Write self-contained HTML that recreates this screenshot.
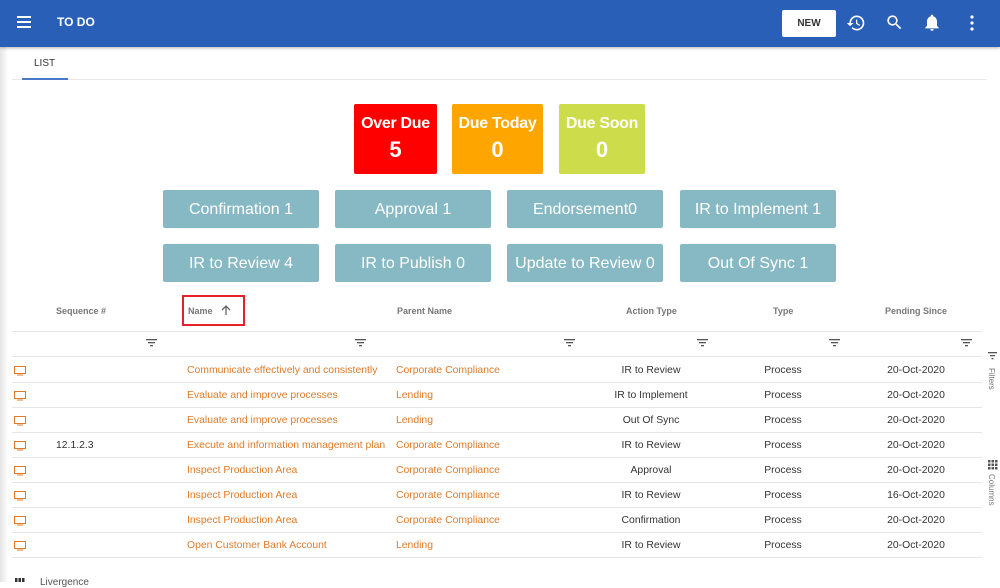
<!DOCTYPE html>
<html><head><style>
*{margin:0;padding:0;box-sizing:border-box}
body{width:1000px;height:582px;overflow:hidden;background:#fff;font-family:"Liberation Sans",Arial,sans-serif;position:relative}
.hdr{position:absolute;left:0;top:0;width:1000px;height:47px;background:#2a5fb8;box-shadow:0 1px 3px rgba(0,0,0,.3)}
.abs{position:absolute}
.tile{position:absolute;color:#fff;font-weight:bold;text-align:center;border-radius:2px}
.tile .t{font-size:16px;margin-top:11px;letter-spacing:-0.3px}
.tile .n{font-size:22px;margin-top:4px}
.btn{position:absolute;width:156px;height:38px;background:#86b9c3;color:#fff;font-size:16px;text-align:center;line-height:40px;border-radius:2px}
.th{position:absolute;top:306px;font-size:9px;font-weight:bold;color:#777}
.line{position:absolute;left:12px;width:970px;height:1px;background:#e6e6e6}
.c{position:absolute;font-size:10.4px;color:#333}
.o{color:#e07b2a}
.r{position:relative;height:25px}.r .c{top:7px}.r .ln{position:absolute;left:12px;width:970px;top:24px;height:1px;background:#e6e6e6}.mon{position:absolute;left:14px;top:8px}
</style></head><body>
<div style="position:absolute;left:0;top:47px;width:8px;height:535px;background:linear-gradient(90deg,#e4e4e4,#fff)"></div>
<div class="hdr">
 <svg class="abs" style="left:17px;top:16px" width="14" height="12"><rect y="0" width="14" height="2" fill="#fff"/><rect y="5" width="14" height="2" fill="#fff"/><rect y="10" width="14" height="2" fill="#fff"/></svg>
 <div class="abs" style="left:57px;top:15px;color:#fff;font-weight:bold;font-size:12px">TO DO</div>
 <div class="abs" style="left:782px;top:10px;width:54px;height:27px;background:#fff;border-radius:2px;font-size:10px;font-weight:bold;color:#333;text-align:center;line-height:27px">NEW</div>
 <svg class="abs" style="left:846px;top:13px" width="20" height="20" viewBox="0 0 24 24"><path fill="#fff" d="M13 3a9 9 0 0 0-9 9H1l3.9 3.9L9 12H6a7 7 0 1 1 2.05 4.95l-1.42 1.42A9 9 0 1 0 13 3zm-1 5v5l4.3 2.5.7-1.2-3.5-2.1V8z"/></svg>
 <svg class="abs" style="left:885px;top:13px" width="19" height="19" viewBox="0 0 24 24"><path fill="#fff" d="M15.5 14h-.8l-.3-.3A6.5 6.5 0 1 0 9.5 16a6.5 6.5 0 0 0 4.2-1.6l.3.3v.8l5 5 1.5-1.5-5-5zm-6 0a4.5 4.5 0 1 1 0-9 4.5 4.5 0 0 1 0 9z"/></svg>
 <svg class="abs" style="left:922px;top:12px" width="20" height="21" viewBox="0 0 24 24"><path fill="#fff" d="M12 22a2 2 0 0 0 2-2h-4a2 2 0 0 0 2 2zm6-6v-5c0-3.1-1.6-5.6-4.5-6.3V4a1.5 1.5 0 0 0-3 0v.7C7.6 5.4 6 7.9 6 11v5l-2 2v1h16v-1z"/></svg>
 <svg class="abs" style="left:970px;top:15px" width="4" height="16"><circle cx="2" cy="2" r="1.6" fill="#fff"/><circle cx="2" cy="8" r="1.6" fill="#fff"/><circle cx="2" cy="14" r="1.6" fill="#fff"/></svg>
</div>
<div class="abs" style="left:34px;top:58px;font-size:10px;color:#333">LIST</div>
<div class="abs" style="left:12px;top:79px;width:975px;height:1px;background:#e8e8e8"></div>
<div class="abs" style="left:22px;top:78px;width:46px;height:2px;background:#4a78c8"></div>

<div class="tile" style="left:354px;top:104px;width:83px;height:70px;background:#ff0000"><div class="t">Over Due</div><div class="n">5</div></div>
<div class="tile" style="left:452px;top:104px;width:91px;height:70px;background:#ffa500"><div class="t">Due Today</div><div class="n">0</div></div>
<div class="tile" style="left:559px;top:104px;width:86px;height:70px;background:#cddc4a"><div class="t">Due Soon</div><div class="n">0</div></div>

<div class="btn" style="left:163px;top:190px">Confirmation 1</div>
<div class="btn" style="left:335px;top:190px">Approval 1</div>
<div class="btn" style="left:507px;top:190px">Endorsement0</div>
<div class="btn" style="left:680px;top:190px">IR to Implement 1</div>
<div class="btn" style="left:163px;top:244px">IR to Review 4</div>
<div class="btn" style="left:335px;top:244px">IR to Publish 0</div>
<div class="btn" style="left:507px;top:244px">Update to Review 0</div>
<div class="btn" style="left:680px;top:244px">Out Of Sync 1</div>

<div class="th" style="left:56px">Sequence #</div>
<div class="abs" style="left:182px;top:295px;width:63px;height:31px;border:2px solid #e8202a"></div>
<div class="th" style="left:188px">Name</div>
<svg class="abs" style="left:221px;top:305px" width="10" height="11" viewBox="0 0 10 11"><path d="M5 10V1M1 5l4-4 4 4" stroke="#666" stroke-width="1.3" fill="none"/></svg>
<div class="th" style="left:397px">Parent Name</div>
<div class="th" style="left:626px">Action Type</div>
<div class="th" style="left:773px">Type</div>
<div class="th" style="left:885px">Pending Since</div>
<div class="line" style="top:331px"></div>
<div class="line" style="top:356px"></div>

<svg class="abs" style="left:0;top:339px" width="982" height="10">
<g fill="#555">
<rect x="146" y="0" width="11" height="1.3"/><rect x="148" y="3" width="7" height="1.3"/><rect x="150" y="6" width="3" height="1.3"/>
<rect x="355" y="0" width="11" height="1.3"/><rect x="357" y="3" width="7" height="1.3"/><rect x="359" y="6" width="3" height="1.3"/>
<rect x="564" y="0" width="11" height="1.3"/><rect x="566" y="3" width="7" height="1.3"/><rect x="568" y="6" width="3" height="1.3"/>
<rect x="697" y="0" width="11" height="1.3"/><rect x="699" y="3" width="7" height="1.3"/><rect x="701" y="6" width="3" height="1.3"/>
<rect x="829" y="0" width="11" height="1.3"/><rect x="831" y="3" width="7" height="1.3"/><rect x="833" y="6" width="3" height="1.3"/>
<rect x="961" y="0" width="11" height="1.3"/><rect x="963" y="3" width="7" height="1.3"/><rect x="965" y="6" width="3" height="1.3"/>
</g></svg>

<div style="position:absolute;left:0;top:358px;width:1000px">
<div class="r"><svg class="mon" width="12" height="10"><rect x="0.5" y="0.5" width="11" height="7" fill="none" stroke="#e07b2a" stroke-width="1"/><rect x="3" y="8.5" width="6" height="1" fill="#e07b2a"/></svg><div class="c o" style="left:187px">Communicate effectively and consistently</div><div class="c o" style="left:396px">Corporate Compliance</div><div class="c" style="left:590px;width:122px;text-align:center">IR to Review</div><div class="c" style="left:740px;width:86px;text-align:center">Process</div><div class="c" style="left:866px;width:100px;text-align:center">20-Oct-2020</div><div class="ln"></div></div>
<div class="r"><svg class="mon" width="12" height="10"><rect x="0.5" y="0.5" width="11" height="7" fill="none" stroke="#e07b2a" stroke-width="1"/><rect x="3" y="8.5" width="6" height="1" fill="#e07b2a"/></svg><div class="c o" style="left:187px">Evaluate and improve processes</div><div class="c o" style="left:396px">Lending</div><div class="c" style="left:590px;width:122px;text-align:center">IR to Implement</div><div class="c" style="left:740px;width:86px;text-align:center">Process</div><div class="c" style="left:866px;width:100px;text-align:center">20-Oct-2020</div><div class="ln"></div></div>
<div class="r"><svg class="mon" width="12" height="10"><rect x="0.5" y="0.5" width="11" height="7" fill="none" stroke="#e07b2a" stroke-width="1"/><rect x="3" y="8.5" width="6" height="1" fill="#e07b2a"/></svg><div class="c o" style="left:187px">Evaluate and improve processes</div><div class="c o" style="left:396px">Lending</div><div class="c" style="left:590px;width:122px;text-align:center">Out Of Sync</div><div class="c" style="left:740px;width:86px;text-align:center">Process</div><div class="c" style="left:866px;width:100px;text-align:center">20-Oct-2020</div><div class="ln"></div></div>
<div class="r"><svg class="mon" width="12" height="10"><rect x="0.5" y="0.5" width="11" height="7" fill="none" stroke="#e07b2a" stroke-width="1"/><rect x="3" y="8.5" width="6" height="1" fill="#e07b2a"/></svg><div class="c" style="left:56px">12.1.2.3</div><div class="c o" style="left:187px">Execute and information management plan</div><div class="c o" style="left:396px">Corporate Compliance</div><div class="c" style="left:590px;width:122px;text-align:center">IR to Review</div><div class="c" style="left:740px;width:86px;text-align:center">Process</div><div class="c" style="left:866px;width:100px;text-align:center">20-Oct-2020</div><div class="ln"></div></div>
<div class="r"><svg class="mon" width="12" height="10"><rect x="0.5" y="0.5" width="11" height="7" fill="none" stroke="#e07b2a" stroke-width="1"/><rect x="3" y="8.5" width="6" height="1" fill="#e07b2a"/></svg><div class="c o" style="left:187px">Inspect Production Area</div><div class="c o" style="left:396px">Corporate Compliance</div><div class="c" style="left:590px;width:122px;text-align:center">Approval</div><div class="c" style="left:740px;width:86px;text-align:center">Process</div><div class="c" style="left:866px;width:100px;text-align:center">20-Oct-2020</div><div class="ln"></div></div>
<div class="r"><svg class="mon" width="12" height="10"><rect x="0.5" y="0.5" width="11" height="7" fill="none" stroke="#e07b2a" stroke-width="1"/><rect x="3" y="8.5" width="6" height="1" fill="#e07b2a"/></svg><div class="c o" style="left:187px">Inspect Production Area</div><div class="c o" style="left:396px">Corporate Compliance</div><div class="c" style="left:590px;width:122px;text-align:center">IR to Review</div><div class="c" style="left:740px;width:86px;text-align:center">Process</div><div class="c" style="left:866px;width:100px;text-align:center">16-Oct-2020</div><div class="ln"></div></div>
<div class="r"><svg class="mon" width="12" height="10"><rect x="0.5" y="0.5" width="11" height="7" fill="none" stroke="#e07b2a" stroke-width="1"/><rect x="3" y="8.5" width="6" height="1" fill="#e07b2a"/></svg><div class="c o" style="left:187px">Inspect Production Area</div><div class="c o" style="left:396px">Corporate Compliance</div><div class="c" style="left:590px;width:122px;text-align:center">Confirmation</div><div class="c" style="left:740px;width:86px;text-align:center">Process</div><div class="c" style="left:866px;width:100px;text-align:center">20-Oct-2020</div><div class="ln"></div></div>
<div class="r"><svg class="mon" width="12" height="10"><rect x="0.5" y="0.5" width="11" height="7" fill="none" stroke="#e07b2a" stroke-width="1"/><rect x="3" y="8.5" width="6" height="1" fill="#e07b2a"/></svg><div class="c o" style="left:187px">Open Customer Bank Account</div><div class="c o" style="left:396px">Lending</div><div class="c" style="left:590px;width:122px;text-align:center">IR to Review</div><div class="c" style="left:740px;width:86px;text-align:center">Process</div><div class="c" style="left:866px;width:100px;text-align:center">20-Oct-2020</div><div class="ln"></div></div>
</div>

<svg class="abs" style="left:988px;top:352px" width="10" height="8"><g fill="#555"><rect x="0" y="0" width="9" height="1.3"/><rect x="2" y="3" width="5" height="1.3"/><rect x="3.5" y="6" width="2" height="1.3"/></g></svg>
<div class="abs" style="left:987px;top:368px;font-size:8px;color:#777;writing-mode:vertical-rl">Filters</div>
<svg class="abs" style="left:988px;top:460px" width="10" height="10"><g fill="#555"><rect x="0" y="0" width="2.5" height="2.5"/><rect x="3.5" y="0" width="2.5" height="2.5"/><rect x="7" y="0" width="2.5" height="2.5"/><rect x="0" y="3.5" width="2.5" height="2.5"/><rect x="3.5" y="3.5" width="2.5" height="2.5"/><rect x="7" y="3.5" width="2.5" height="2.5"/><rect x="0" y="7" width="2.5" height="2.5"/><rect x="3.5" y="7" width="2.5" height="2.5"/><rect x="7" y="7" width="2.5" height="2.5"/></g></svg>
<div class="abs" style="left:987px;top:474px;font-size:8px;color:#777;writing-mode:vertical-rl">Columns</div>

<svg class="abs" style="left:15px;top:578px" width="12" height="4"><g fill="#333"><rect x="0" y="0" width="2.5" height="4"/><rect x="3.5" y="0" width="2.5" height="4"/><rect x="7" y="0" width="2.5" height="4"/></g></svg>
<div class="abs" style="left:40px;top:577px;font-size:10px;color:#555">Livergence</div>
</body></html>
